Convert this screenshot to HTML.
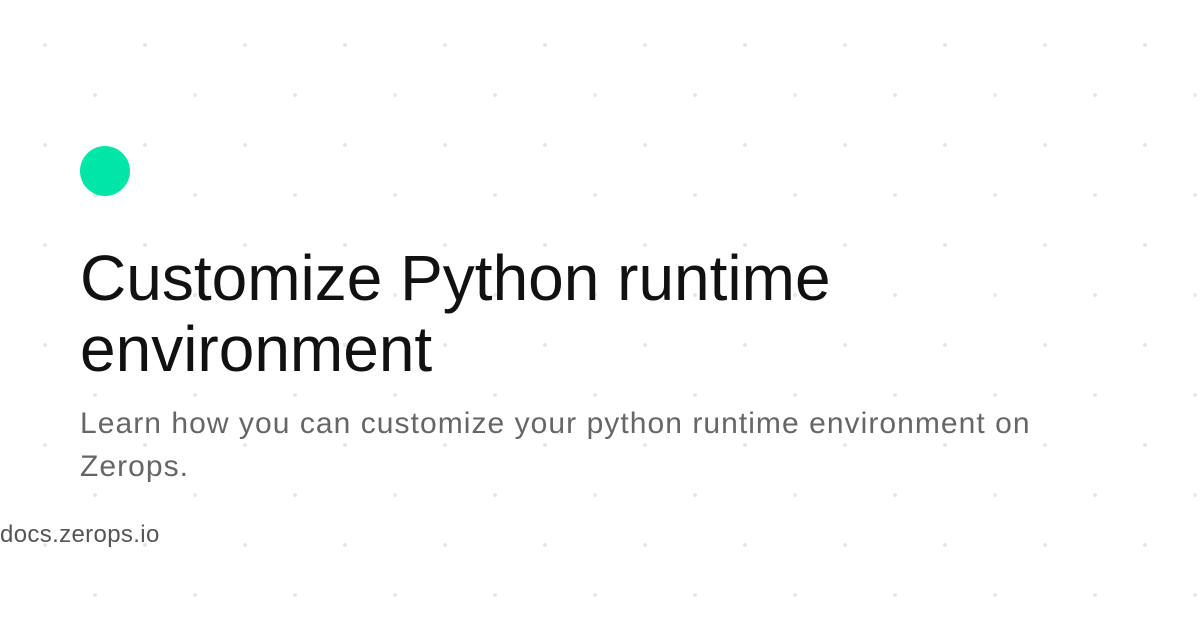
<!DOCTYPE html>
<html><head><style>
html,body{margin:0;padding:0}
body{width:1200px;height:630px;position:relative;overflow:hidden;background:#fff;font-family:"Liberation Sans",sans-serif;
background-image:radial-gradient(circle,#e8e8e8 1.8px,transparent 2.3px),radial-gradient(circle,#e8e8e8 1.8px,transparent 2.3px);
background-size:100px 100px,100px 100px;background-position:-5px -5px,45px 45px;}
.dot{position:absolute;left:80px;top:146px;width:50px;height:50px;border-radius:50%;background:#00e6a6}
h1{position:absolute;left:80px;top:243px;margin:0;font-weight:400;font-size:64px;line-height:71px;color:#111;width:1000px}
p{position:absolute;left:80px;top:402px;margin:0;font-size:30px;line-height:43px;color:#666;width:1100px;letter-spacing:1.05px}
.u{position:absolute;left:0;top:521px;font-size:24px;color:#555;letter-spacing:0.35px}
</style></head><body>
<div class="dot"></div>
<h1>Customize Python runtime<br>environment</h1>
<p>Learn how you can customize your python runtime environment on<br>Zerops.</p>
<div class="u">docs.zerops.io</div>
</body></html>
